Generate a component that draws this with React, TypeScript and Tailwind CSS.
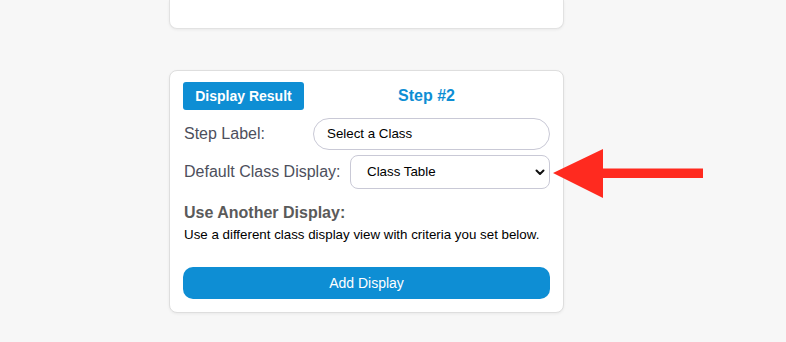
import React from "react";

export default function App() {
  return (
    <div className="relative w-[786px] h-[342px] bg-[#f7f7f7] overflow-hidden" style={{ fontFamily: '"Liberation Sans", Arial, sans-serif' }}>
      <div className="pl-[169px] flex flex-col">
        <div className="w-[395px] h-[29px] bg-white rounded-b-lg border border-t-0 border-[#e2e2e2] shadow-[0_1px_3px_rgba(0,0,0,0.06)]" />
        <div className="mt-[41px] w-[395px] h-[243px] bg-white rounded-lg border border-[#dedede] shadow-[0_1px_3px_rgba(0,0,0,0.06)] pt-[11px] px-[13px] flex flex-col">
          <div className="flex items-center">
            <button className="h-[28px] w-[121px] bg-[#0e8ed4] text-white font-bold text-[14px] rounded-[3px] flex items-center justify-center">Display Result</button>
            <div className="flex-1 text-center text-[#0e8ed4] font-bold text-[16px] pr-[1px]">Step #2</div>
          </div>
          <div className="flex items-center mt-[8px]">
            <div className="w-[130px] text-[16px] text-[#4d4f5c] pl-[1px]">Step Label:</div>
            <div className="h-[32px] w-[237px] rounded-full border border-[#c9c9d6] flex items-center pl-[13px] text-[13.33px] text-black">Select a Class</div>
          </div>
          <div className="flex items-center mt-[5px]">
            <div className="w-[167px] text-[16px] text-[#4d4f5c] pl-[1px]">Default Class Display:</div>
            <div className="h-[34px] w-[200px] rounded-[8px] border border-[#c9c9d6] flex items-center pl-[16px] pr-[3px] text-[13.33px] text-black">
              <span className="flex-1">Class Table</span>
              <svg width="10" height="7" viewBox="0 0 10 7" className="mr-[1px]"><path d="M1.5 1.5 L5 5 L8.5 1.5" fill="none" stroke="#111" strokeWidth="2" strokeLinecap="round" strokeLinejoin="round" /></svg>
            </div>
          </div>
          <div className="mt-[14px] text-[16px] font-bold text-[#5a5a5a] pl-[1px] leading-[20px]">Use Another Display:</div>
          <div className="mt-[4px] text-[13.33px] text-black pl-[1px] leading-[16px]">Use a different class display view with criteria you set below.</div>
          <button className="mt-[24px] h-[32px] w-[367px] bg-[#0e8ed4] text-white text-[14px] rounded-[10px]">Add Display</button>
        </div>
      </div>
      <svg className="absolute left-[553px] top-[149px]" width="151" height="50" viewBox="0 0 151 50">
        <polygon points="0,24 50,0 50,19.5 150,19.5 150,29 50,29 50,49" fill="#ff2a1f" />
      </svg>
    </div>
  );
}
